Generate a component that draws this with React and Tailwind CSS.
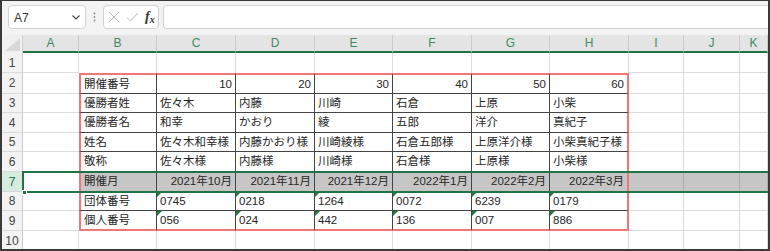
import React from "react";

const COLS = ["A", "B", "C", "D", "E", "F", "G", "H", "I", "J", "K"];

const DATA = {
  2: ["開催番号", "10", "20", "30", "40", "50", "60"],
  3: ["優勝者姓", "佐々木", "内藤", "川崎", "石倉", "上原", "小柴"],
  4: ["優勝者名", "和幸", "かおり", "綾", "五郎", "洋介", "真紀子"],
  5: ["姓名", "佐々木和幸様", "内藤かおり様", "川崎綾様", "石倉五郎様", "上原洋介様", "小柴真紀子様"],
  6: ["敬称", "佐々木様", "内藤様", "川崎様", "石倉様", "上原様", "小柴様"],
  7: ["開催月", "2021年10月", "2021年11月", "2021年12月", "2022年1月", "2022年2月", "2022年3月"],
  8: ["団体番号", "0745", "0218", "1264", "0072", "6239", "0179"],
  9: ["個人番号", "056", "024", "442", "136", "007", "886"],
};

function Cell({ r, c }) {
  const inTable = r >= 2 && r <= 9 && c >= 2 && c <= 8;
  const sel = r === 7;
  let cls = "relative flex items-center px-[3px] whitespace-nowrap overflow-hidden text-[11.5px] text-[#262626] ";
  if (inTable) {
    cls += c === 8 ? "border-r-2 border-r-[#f47575] " : "border-r border-r-[#444444] ";
    cls += r === 9 ? "border-b-2 border-b-[#f47575] " : "border-b border-b-[#444444] ";
    if (c === 2) cls += "border-l-2 border-l-[#f47575] ";
    if (r === 2) cls += "border-t-2 border-t-[#f47575] ";
    cls += sel ? "bg-[#c6c6c6] " : "bg-white ";
  } else {
    const noRight = c === 1 && r >= 2 && r <= 9;
    const noBottom = r === 1 && c >= 2 && c <= 8;
    if (sel && c >= 9) {
      cls += "bg-[#c6c6c6] border-r border-r-[#acacac] border-b border-b-[#acacac] ";
    } else {
      cls += "bg-white ";
      cls += noRight ? "" : "border-r border-r-[#dcdcdc] ";
      cls += noBottom ? "" : "border-b border-b-[#dcdcdc] ";
    }
  }
  const right = (r === 2 || r === 7) && c >= 3 && c <= 8;
  if (right) cls += "justify-end ";
  const text = inTable ? DATA[r][c - 2] : "";
  const tri = (r === 8 || r === 9) && c >= 3 && c <= 8;
  return (
    <div className={cls}>
      {tri && (
        <span className="absolute left-0 top-0 w-0 h-0 border-t-[5px] border-r-[5px] border-t-[#1e7a3e] border-r-transparent" />
      )}
      <span className="leading-none pt-[1px]">{text}</span>
    </div>
  );
}

export default function App() {
  const rows = [1, 2, 3, 4, 5, 6, 7, 8, 9, 10];
  return (
    <div className="w-[770px] h-[251px] box-border border-l-2 border-r-2 border-b-2 border-t border-[#3a3a3a] overflow-hidden bg-[#f3f3f3] font-['Liberation_Sans','Noto_Sans_CJK_JP',sans-serif] flex flex-col">
      {/* formula bar */}
      <div className="h-[34px] shrink-0 flex items-start pt-[4px] pl-[6px] gap-0">
        <div className="w-[78px] h-[24px] bg-white border border-[#d2d2d2] rounded-[4px] flex items-center justify-between pl-[5px] pr-[4px]">
          <span className="text-[12px] text-[#333] pt-[1px]">A7</span>
          <svg width="10" height="10" viewBox="0 0 10 10">
            <path d="M1.5 3.5 L5 7 L8.5 3.5" fill="none" stroke="#444" strokeWidth="1.1" />
          </svg>
        </div>
        <div className="w-[17px] h-[24px] flex items-center justify-center">
          <svg width="3" height="10" viewBox="0 0 3 10">
            <circle cx="1.5" cy="1.5" r="0.9" fill="#8a8a8a" />
            <circle cx="1.5" cy="5" r="0.9" fill="#8a8a8a" />
            <circle cx="1.5" cy="8.5" r="0.9" fill="#8a8a8a" />
          </svg>
        </div>
        <div className="w-[56px] h-[24px] bg-white border border-[#d2d2d2] rounded-[4px] flex items-center pl-[4px] gap-[6px]">
          <svg width="12" height="12" viewBox="0 0 12 12">
            <path d="M1 1 L11 11 M11 1 L1 11" stroke="#b8b8b8" strokeWidth="1" />
          </svg>
          <svg width="13" height="12" viewBox="0 0 13 12">
            <path d="M1 6.5 L4.5 10 L12 2" fill="none" stroke="#b8b8b8" strokeWidth="1" />
          </svg>
          <span className="font-['Liberation_Serif',serif] italic font-bold text-[14px] text-[#333] leading-none">
            f<span className="text-[10px] align-[-2px]">x</span>
          </span>
        </div>
        <div className="flex-1 ml-[4px] h-[24px] bg-white border border-[#d2d2d2] rounded-l-[4px] border-r-0" />
      </div>

      {/* grid */}
      <div className="relative grid grid-cols-[21px_56px_78px_79px_79px_78px_79px_78px_79px_55px_56px_28px] grid-rows-[18px_20px_21px_19px_20px_19px_20px_20px_19px_20px_20px]">
        {/* corner */}
        <div className="bg-[#f0f0f0] border-r border-r-[#d0d0d0] flex items-end justify-end p-[2px]">
          <svg width="15" height="13" viewBox="0 0 15 13">
            <polygon points="15,0 15,13 0,13" fill="#d9d9d9" />
          </svg>
        </div>
        {COLS.map((l) => (
          <div
            key={l}
            className="bg-[#e4e4e4] border-r border-r-[#cbcbcb] border-b-2 border-b-[#217346] flex items-center justify-center text-[12px] text-[#3f8a62]"
          >
            {l}
          </div>
        ))}
        {rows.map((r) => (
          <React.Fragment key={r}>
            <div
              className={
                r === 7
                  ? "bg-[#d6ecdf] border-r border-r-[#cbcbcb] border-b border-b-[#d6d6d6] flex items-center justify-center text-[12px] text-[#217346]"
                  : "bg-[#f3f3f3] border-r border-r-[#cbcbcb] border-b border-b-[#dadada] flex items-center justify-center text-[12px] text-[#444]"
              }
            >
              {r}
            </div>
            {COLS.map((_, i) => (
              <Cell key={i} r={r} c={i + 1} />
            ))}
          </React.Fragment>
        ))}
        {/* selection overlay for row 7 */}
        <div className="absolute left-[20px] right-0 top-[136px] h-[22px] border-2 border-r-0 border-[#217346] pointer-events-none" />
        <div className="absolute left-[20px] top-[155px] w-[5px] h-[5px] bg-[#217346] border border-white pointer-events-none" />
      </div>
    </div>
  );
}
